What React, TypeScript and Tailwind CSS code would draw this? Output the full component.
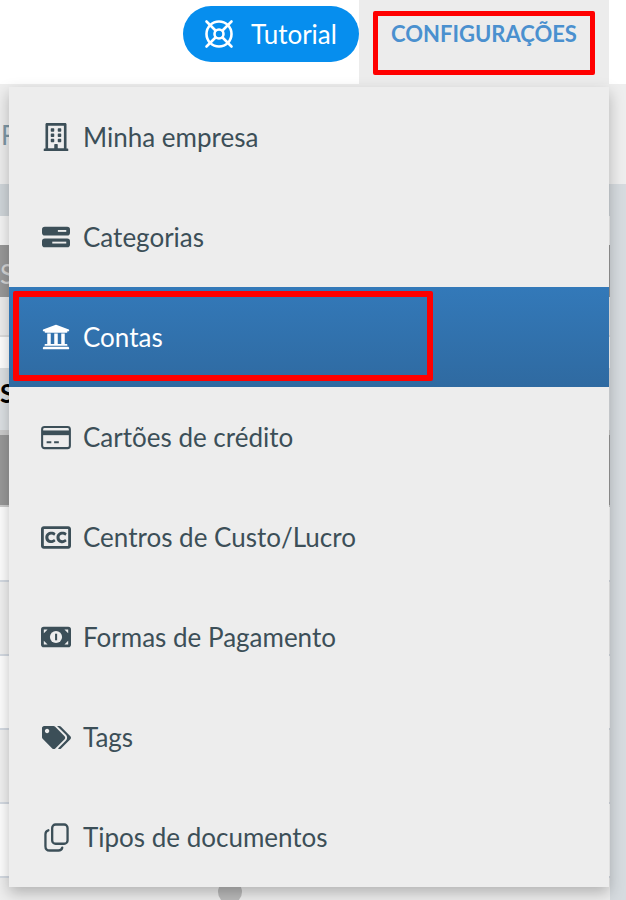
import type { ReactNode } from "react";
import { FaRegBuilding, FaTags, FaUniversity, FaRegClosedCaptioning } from "react-icons/fa";

function LifeRing() {
  return (
    <svg viewBox="0 0 32 32" className="h-[32px] w-[32px]" fill="none" stroke="currentColor" strokeWidth="2.6">
      <circle cx="16" cy="16" r="12.5" />
      <circle cx="16" cy="16" r="4.5" />
      <path d="M3.5 3.5l9 9M28.5 3.5l-9 9M3.5 28.5l9-9M28.5 28.5l-9-9" strokeLinecap="round" />
    </svg>
  );
}

function ServerBars() {
  return (
    <svg viewBox="0 0 30 22" className="h-[22px] w-[28px]">
      <rect x="0" y="0" width="30" height="9.5" rx="3" fill="currentColor" />
      <rect x="0" y="12.5" width="30" height="9.5" rx="3" fill="currentColor" />
      <rect x="17" y="3.5" width="9" height="2" fill="#ededed" />
      <rect x="11" y="16" width="15" height="2" fill="#ededed" />
    </svg>
  );
}

function CardIcon() {
  return (
    <svg viewBox="0 0 32 25" className="h-[25px] w-[31px]" fill="none">
      <rect x="1.2" y="1.2" width="29.6" height="22.6" rx="2.5" stroke="currentColor" strokeWidth="2.2" />
      <rect x="1.2" y="5" width="29.6" height="5" fill="currentColor" />
      <path d="M6 17.5h5M14 17.5h5" stroke="currentColor" strokeWidth="2" />
    </svg>
  );
}

function BillIcon() {
  return (
    <svg viewBox="0 0 32 22" className="h-[22px] w-[31px]">
      <rect width="32" height="22" rx="3" fill="currentColor" />
      <circle cx="16" cy="11" r="6.5" fill="#ededed" />
      <rect x="15" y="7.5" width="2.2" height="7" fill="currentColor" />
      <path d="M3 7v-4h4zM29 7v-4h-4zM3 15v4h4zM29 15v4h-4z" fill="#ededed" />
    </svg>
  );
}

function CopyIcon() {
  return (
    <svg viewBox="0 0 26 30" className="h-[29px] w-[25px]" fill="none" stroke="currentColor" strokeWidth="2.4">
      <rect x="8.5" y="1.5" width="16" height="20" rx="3.5" />
      <path d="M4.5 7.5C2.5 8 1.5 9.5 1.5 11.5v12.5c0 2.5 1.5 4.5 4.5 4.5h9c2 0 3.5-1 4-3" strokeLinecap="round" />
    </svg>
  );
}

const menu: { label: string; icon: ReactNode; active?: boolean }[] = [
  { label: "Minha empresa", icon: <FaRegBuilding size={28} /> },
  { label: "Categorias", icon: <ServerBars /> },
  { label: "Contas", icon: <FaUniversity size={28} />, active: true },
  { label: "Cartões de crédito", icon: <CardIcon /> },
  { label: "Centros de Custo/Lucro", icon: <FaRegClosedCaptioning size={31} /> },
  { label: "Formas de Pagamento", icon: <BillIcon /> },
  { label: "Tags", icon: <FaTags size={29} /> },
  { label: "Tipos de documentos", icon: <CopyIcon /> },
];

export default function App() {
  return (
    <div className="relative flex h-[900px] w-[626px] flex-col overflow-hidden bg-[#eeeeee] font-['Lato',sans-serif]">
      <header className="flex h-[84px] shrink-0 items-start bg-white pl-[183px]">
        <button className="mt-[6px] flex h-[56px] w-[176px] items-center gap-[16px] rounded-full bg-[#068eee] pl-[20px] text-[26px] text-white">
          <LifeRing />
          Tutorial
        </button>
        <div className="flex h-[84px] w-[250px] justify-center bg-[#ececec] pt-[19px] text-[22px] leading-[30px] font-bold text-[#4a90cf]">
          CONFIGURAÇÕES
        </div>
      </header>

      <div className="h-[100px] shrink-0 pt-[36px] pl-[1px] text-[26px] leading-[30px] text-[#7f98a6]">
        F
      </div>

      <div className="flex min-h-0 flex-1">
        <div className="flex w-[610px] shrink-0 flex-col">
          <div className="h-[32px] bg-[#d0d6da]" />
          <div className="h-[29px] bg-[#f5f5f5]" />
          <div className="h-[52px] bg-[#999999] pt-[14px] text-[26px] leading-[30px] text-[#d5d5d5]">SF</div>
          <div className="h-[40px] border-b-2 border-[#dddddd] bg-[#eeeeee]" />
          <div className="h-[31px] bg-white" />
          <div className="h-[62px] bg-[#dde1e4] pt-[10px] text-[26px] leading-[30px] font-bold text-black">S</div>
          <div className="h-[5px] bg-[#cccccc]" />
          <div className="h-[72px] border-b-2 border-[#cccccc] bg-[#999999]" />
          <div className="h-[75px] border-b-2 border-[#d5dbe3] bg-white" />
          <div className="h-[74px] border-b-2 border-[#d5dbe3] bg-[#f2f2f2]" />
          <div className="h-[74px] border-b-2 border-[#d5dbe3] bg-white" />
          <div className="h-[74px] border-b-2 border-[#d5dbe3] bg-[#f2f2f2]" />
          <div className="h-[74px] border-b-2 border-[#d5dbe3] bg-white" />
          <div className="flex min-h-0 flex-1 justify-center bg-[#eeeeee]">
            <span className="mt-[2px] mr-[150px] h-[24px] w-[24px] shrink-0 rounded-full bg-[#bbbbbb]" />
          </div>
        </div>
        <div className="flex-1 bg-[#d6dbdf]" />
      </div>

      {/* dropdown sits over the page */}
      <nav className="absolute top-[87px] left-[9px] w-[600px] bg-[#ededed] shadow-[0_6px_14px_rgba(0,0,0,0.25)]">
        {menu.map((item) => (
          <a
            key={item.label}
            className={
              item.active
                ? "flex h-[100px] items-center bg-gradient-to-b from-[#3379b9] to-[#2f6aa1] text-[26px] text-white"
                : "flex h-[100px] items-center text-[26px] text-[#3c4f58]"
            }
          >
            <span className="ml-[32px] mr-[12px] flex w-[30px] justify-center">{item.icon}</span>
            {item.label}
          </a>
        ))}
      </nav>

      {/* red annotation boxes */}
      <div className="absolute top-[11px] left-[373px] h-[64px] w-[222px] rounded-[2px] border-[5px] border-[#ff0000]" />
      <div className="absolute top-[291px] left-[13px] h-[90px] w-[420px] rounded-[2px] border-[6px] border-[#ff0000]" />
    </div>
  );
}
